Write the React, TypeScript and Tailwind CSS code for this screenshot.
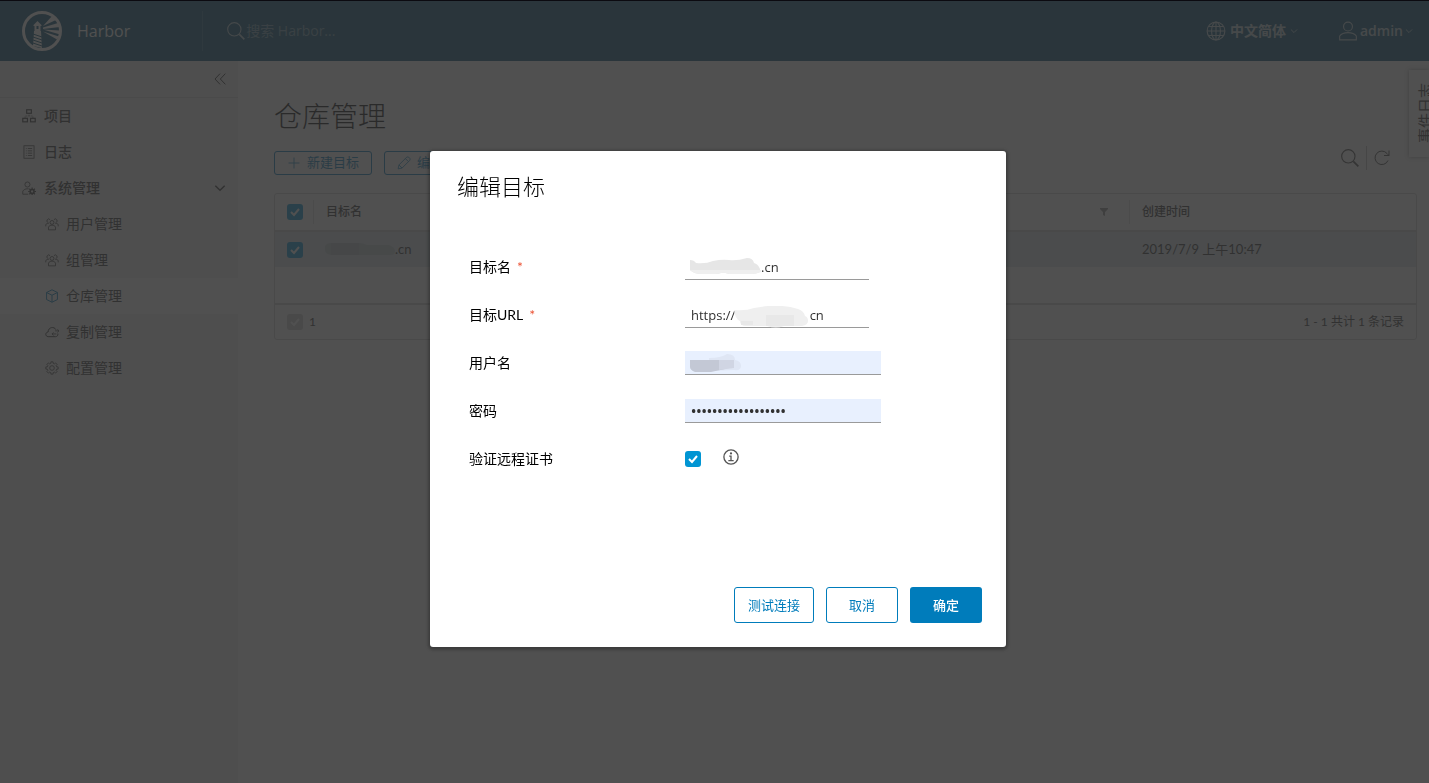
import { useState } from 'react';
import type { ReactNode } from 'react';
import { clsx } from 'clsx';

type IconProps = { className?: string; children?: ReactNode };

function Icon({ className, children }: IconProps) {
  return (
    <svg
      viewBox="0 0 36 36"
      fill="none"
      stroke="currentColor"
      strokeWidth="2"
      className={clsx('shrink-0', className)}
      aria-hidden="true"
    >
      {children}
    </svg>
  );
}

const SearchIcon = ({ className }: IconProps) => (
  <Icon className={className}>
    <circle cx="15" cy="15" r="12" />
    <path d="M24 24l9 9" strokeWidth="3" />
  </Icon>
);

const ProjectsIcon = ({ className }: IconProps) => (
  <Icon className={className}>
    <rect x="12" y="2" width="12" height="9" strokeWidth="3" />
    <rect x="2" y="24" width="12" height="9" strokeWidth="3" />
    <rect x="22" y="24" width="12" height="9" strokeWidth="3" />
    <path d="M18 11v6M8 23v-5h20v5" strokeDasharray="2 2" />
  </Icon>
);

const LogsIcon = ({ className }: IconProps) => (
  <Icon className={className}>
    <rect x="5" y="2" width="26" height="32" />
    <path d="M10 9h2M15 9h11M10 15h2M15 15h11M10 21h2M15 21h11M10 27h2M15 27h11" />
  </Icon>
);

const AdminIcon = ({ className }: IconProps) => (
  <Icon className={className}>
    <circle cx="14" cy="9" r="6.5" />
    <path d="M16 34H2v-8c3-4 7-6 12-6h3" />
    <circle cx="26" cy="27" r="5" strokeWidth="4" />
    <path d="M26 17v4M26 33v3M16 27h4M32 27h4M19 20l3 3M30 31l3 3M33 20l-3 3M22 31l-3 3" strokeWidth="3" />
  </Icon>
);

const UsersIcon = ({ className }: IconProps) => (
  <Icon className={className}>
    <circle cx="18" cy="14" r="5" />
    <path d="M9 33v-7c2-4 5-5 9-5s7 1 9 5v7z" />
    <path d="M13 7a4.500 4.500 0 1 0-5 7M2 24v-4c1-3 4-4 8-4M23 7a4.500 4.500 0 1 1 5 7M34 24v-4c-1-3-4-4-8-4" />
  </Icon>
);

const RegistryIcon = ({ className }: IconProps) => (
  <Icon className={className}>
    <path d="M18 2l14 7v18l-14 7-14-7V9zM4 9l14 7 14-7M18 16v18" strokeWidth="2.500" />
  </Icon>
);

const ReplicationIcon = ({ className }: IconProps) => (
  <Icon className={className}>
    <path d="M33 22c1 5-2 8-6 8H8c-8-1-8-11 0-12C8 5 24 3 28 12" strokeWidth="2.500" />
    <path d="M36 15H26M32 11l4 4-4 4M29 23H18M22 19l-4 4 4 4" />
  </Icon>
);

const ConfigIcon = ({ className }: IconProps) => (
  <Icon className={className}>
    <circle cx="18" cy="18" r="6" />
    <path
      strokeLinejoin="round"
      d="M15.200 2.200H20.800L21 5.900 24.400 7.300 27.200 4.900 31.100 8.800 28.700 11.600 30.100 15 33.800 15.200V20.800L30.100 21 28.700 24.400 31.100 27.200 27.200 31.100 24.400 28.700 21 30.100 20.800 33.800H15.200L15 30.100 11.600 28.700 8.800 31.100 4.900 27.200 7.300 24.400 5.900 21 2.200 20.800V15.200L5.900 15 7.300 11.600 4.900 8.800 8.800 4.900 11.600 7.300 15 5.900Z"
    />
  </Icon>
);

const GlobeIcon = ({ className }: IconProps) => (
  <Icon className={className}>
    <circle cx="18" cy="18" r="16" />
    <ellipse cx="18" cy="18" rx="8" ry="16" />
    <path d="M18 2v32M2 18h32M5 10h26M5 26h26" />
  </Icon>
);

const UserIcon = ({ className }: IconProps) => (
  <Icon className={className}>
    <circle cx="18" cy="10" r="8" />
    <path d="M3 34v-7c3-4 8-6 15-6s12 2 15 6v7z" />
  </Icon>
);

const PencilIcon = ({ className }: IconProps) => (
  <Icon className={className}>
    <path d="M3 33l2-10L25 3c2-1 4-1 5 0l3 3c1 1 1 3 0 5L13 31zM22 7l7 7M5 23l8 8" />
  </Icon>
);

const RefreshIcon = ({ className }: IconProps) => (
  <Icon className={className}>
    <path d="M30 23A13.500 13.500 0 1 1 28 9l4 4M32 3v10H22" />
  </Icon>
);

const InfoIcon = ({ className }: IconProps) => (
  <Icon className={className}>
    <circle cx="18" cy="18" r="16" strokeWidth="3" />
    <circle cx="18" cy="10" r="2.500" fill="currentColor" stroke="none" />
    <path d="M14 16h4v10M12 26h12" strokeWidth="3" />
  </Icon>
);

const ChevronIcon = ({ className }: IconProps) => (
  <Icon className={className}>
    <path d="M4 11l14 14 14-14" strokeWidth="4" />
  </Icon>
);

function Logo() {
  return (
    <svg viewBox="0 0 40 40" className="size-10 shrink-0 text-[#fafafa]" aria-hidden="true">
      <circle cx="20" cy="20" r="18.500" fill="none" stroke="currentColor" strokeWidth="3" />
      <g fill="currentColor">
        <path d="M15.500 10l4 4v1h-1v5h-6v-5h-1v-1z" />
        <path d="M12 20h7l1 17-9-2z" />
        <path d="M21 15L30 5l4 4zM21 16.500L36 12l2 4-17 2zM21 18.500l17 1v4zM21 20.500l16 5-2 3z" />
      </g>
      <path d="M14.500 15v3h2v-3z" className="fill-[#004c70]" />
      <path d="M11 23l9 3M11 26l9 3M11 29l9 3M11 32l9 3" className="stroke-[#004c70]" strokeWidth="1" />
    </svg>
  );
}

function Checkbox({ id, label, disabled }: { id?: string; label: string; disabled?: boolean }) {
  return (
    <span className="relative block size-4 shrink-0">
      <input
        id={id}
        type="checkbox"
        defaultChecked
        disabled={disabled}
        aria-label={label}
        className="block size-4 appearance-none rounded-[3px] border border-[#737373] checked:border-0 checked:bg-[#0095d3] disabled:bg-[#cccccc]"
      />
      <svg viewBox="0 0 16 16" className="pointer-events-none absolute inset-0 size-4" aria-hidden="true">
        <path d="M4 8l3 3 5-6" fill="none" stroke="#fff" strokeWidth="2" />
      </svg>
    </span>
  );
}

const adminItems = [
  { label: '用户管理', icon: UsersIcon },
  { label: '组管理', icon: UsersIcon },
  { label: '仓库管理', icon: RegistryIcon, active: true },
  { label: '复制管理', icon: ReplicationIcon },
  { label: '配置管理', icon: ConfigIcon },
];

function Header() {
  return (
    <header className="flex h-15 items-center bg-[#004c70] font-['Open_Sans','Noto_Sans_CJK_SC',sans-serif] text-sm text-[#fafafa]">
      <a href="#home" className="flex items-center gap-[15px] pl-[22px] text-base">
        <Logo />
        Harbor
      </a>
      <div className="ml-[72px] h-10 w-px bg-white/15" />
      <label className="ml-[23px] flex items-center opacity-70">
        <SearchIcon className="size-5" />
        <input
          type="search"
          aria-label="搜索"
          placeholder="搜索 Harbor..."
          className="w-60 bg-transparent outline-none placeholder:text-white/60"
        />
      </label>
      <div className="ml-auto flex items-center gap-10 pr-4 font-semibold opacity-75">
        <button className="flex items-center gap-1">
          <GlobeIcon className="size-5" />
          中文简体
          <ChevronIcon className="size-2" />
        </button>
        <button className="flex items-center gap-0.5">
          <UserIcon className="size-5" />
          admin
          <ChevronIcon className="size-2" />
        </button>
      </div>
    </header>
  );
}

function Sidebar() {
  return (
    <nav className="w-[238px] shrink-0 bg-[#eeeeee] text-sm text-[#313131]">
      <div className="flex h-9 items-center justify-end pr-3">
        <button aria-label="收起">
          <Icon className="size-3">
            <path d="M18 2L3 18l15 16M34 2L19 18l15 16" strokeWidth="3" />
          </Icon>
        </button>
      </div>
      <div className="border-t border-[#d7d7d7]">
        <a href="#projects" className="flex h-9 items-center gap-2 pl-[22px] font-medium">
          <ProjectsIcon className="size-3.5" />
          项目
        </a>
        <a href="#logs" className="flex h-9 items-center gap-2 pl-[22px] font-medium">
          <LogsIcon className="size-3.5" />
          日志
        </a>
        <button className="flex h-9 w-full items-center gap-2 pr-3 pl-[22px] font-medium">
          <AdminIcon className="size-3.5" />
          系统管理
          <ChevronIcon className="ml-auto size-3" />
        </button>
        {adminItems.map(({ label, icon: ItemIcon, active }) => (
          <a
            key={label}
            href="#admin"
            className={clsx('flex h-9 items-center gap-[7px] pl-[45px]', active && 'bg-[#fafafa]')}
          >
            <ItemIcon className={clsx('size-3.5', active && 'text-[#007cbb]')} />
            {label}
          </a>
        ))}
      </div>
    </nav>
  );
}

function ColumnHead({ children, filter }: { children: ReactNode; filter?: boolean }) {
  return (
    <th className="p-0 text-left font-medium">
      <div className="flex h-6 items-center justify-between border-l border-[#dddddd] pr-5 pl-3">
        {children}
        {filter && (
          <svg viewBox="0 0 10 10" className="size-2.5 fill-[#8a8a8a]" aria-hidden="true">
            <path d="M1 1h8v1L6 5v4l-2-1V5L1 2z" />
          </svg>
        )}
      </div>
    </th>
  );
}

function Registries() {
  return (
    <main className="min-w-0 flex-1 bg-[#fafafa] pt-[35px] pr-3 pl-9 text-[#313131]">
      <h1 className="text-[28px] leading-10 font-light text-black">仓库管理</h1>
      <div className="mt-2.5 flex items-end">
        <div className="flex gap-3 text-[13px] text-[#007cbb]">
          <button className="flex h-6 items-center gap-1.5 rounded-[3px] border border-[#007cbb] px-3">
            <Icon className="size-3.5">
              <path d="M18 4v28M4 18h28" />
            </Icon>
            新建目标
          </button>
          <button className="flex h-6 items-center gap-1.5 rounded-[3px] border border-[#007cbb] px-3">
            <PencilIcon className="size-3.5" />
            编辑
          </button>
        </div>
        <div className="mr-[26px] mb-[5px] ml-auto flex h-6 items-center gap-1.5 text-[#454545]">
          <button aria-label="过滤">
            <SearchIcon className="size-5" />
          </button>
          <span className="h-6 w-px bg-[#bbbbbb]" />
          <button aria-label="刷新">
            <RefreshIcon className="size-[18px]" />
          </button>
        </div>
      </div>

      <div className="mt-[18px] rounded-[3px] border border-[#d0d0d0]">
        <table className="w-full table-fixed text-xs">
          <colgroup>
            <col className="w-[38px]" />
            <col />
            <col />
            <col />
            <col className="w-[287px]" />
          </colgroup>
          <thead>
            <tr className="h-[37px] border-b-2 border-[#d0d0d0]">
              <th className="p-0 pl-3">
                <Checkbox label="全选" />
              </th>
              <ColumnHead filter>目标名</ColumnHead>
              <ColumnHead filter>目标URL</ColumnHead>
              <ColumnHead filter>验证远程证书</ColumnHead>
              <ColumnHead>创建时间</ColumnHead>
            </tr>
          </thead>
          <tbody>
            <tr className="h-9 bg-[#d9e4ea] text-[13px]">
              <td className="p-0 pl-3">
                <Checkbox label="选择" />
              </td>
              <td className="p-0 pl-3">
                <span className="flex items-center">
                  <svg viewBox="0 0 70 14" className="h-3.5 w-[70px]" aria-hidden="true">
                    <path d="M0 4q2-3 6-3h28q4 0 8 2h22q6 2 6 6t-4 4H6q-6-1-6-5z" fill="#c3ced2" />
                    <path d="M6 1h28v12H6z" fill="#b8c4ca" />
                  </svg>
                  .cn
                </span>
              </td>
              <td />
              <td />
              <td className="p-0 pl-[13px]">2019/7/9 上午10:47</td>
            </tr>
          </tbody>
        </table>
        <div className="h-9" />
        <div className="flex h-9 items-center gap-1.5 border-t-2 border-[#d0d0d0] px-3 text-xs">
          <Checkbox label="已选" disabled />1
          <span className="ml-auto">1 - 1 共计 1 条记录</span>
        </div>
      </div>
    </main>
  );
}

function EventTab() {
  return (
    <button className="absolute top-[69px] right-0 flex h-[87px] w-5 items-center bg-[#fafafa] pl-2 text-[15px] leading-4 text-[#313131] shadow-[0_0_4px_#00000066]">
      <span className="shrink-0 rotate-180 [text-orientation:sideways] [writing-mode:vertical-rl]">事件日志</span>
    </button>
  );
}

const inputStyle = "border-b border-[#9a9a9a] px-1.5 font-['Open_Sans','Noto_Sans_CJK_SC',sans-serif] text-[#313131] outline-none";

function Field({ id, label, required, children }: { id: string; label: string; required?: boolean; children: ReactNode }) {
  return (
    <div className="flex h-12 items-center">
      <label htmlFor={id} className="w-[216px] shrink-0">
        {label}
        {required && <span className="ml-1.5 text-[#e62700]/80">*</span>}
      </label>
      <div className="relative flex items-center">{children}</div>
    </div>
  );
}

function EditDialog() {
  const [name, setName] = useState('.cn');
  // blanks keep room for the masked host
  const [url, setUrl] = useState('https://' + '\u00a0'.repeat(22) + 'cn');

  return (
    <form
      role="dialog"
      aria-labelledby="dialog-title"
      onSubmit={(e) => e.preventDefault()}
      className="flex min-h-[496px] w-full max-w-[576px] flex-col rounded-[3px] bg-white p-6 text-sm text-black shadow-[0_1px_3px_2px_#00000040]"
    >
      <h2 id="dialog-title" className="pl-[3px] text-[22px] leading-6 font-light">
        编辑目标
      </h2>
      <div className="mt-11 pl-[15px]">
        <Field id="name" label="目标名" required>
          <input
            id="name"
            value={name}
            onChange={(e) => setName(e.target.value)}
            className={clsx(inputStyle, 'h-[26px] w-[184px] indent-[70px] text-[13px]')}
          />
          <svg viewBox="0 0 72 18" className="pointer-events-none absolute top-1 left-1 h-[18px] w-[72px]" aria-hidden="true">
            <path d="M1 2q4 0 6 3 10 1 17-2 9-2 16-1 8 1 18-2 6 0 7 5 4 1 6 6v3q-4 2-10 2H40q-6-2-8-1t-6 1H12q-7 0-11-4z" fill="#e6e6e6" />
            <path d="M1 12h71v2q-4 2-10 2H40q-6-2-8-1t-6 1H12q-7 0-11-4z" fill="#efefef" />
          </svg>
        </Field>
        <Field id="url" label="目标URL" required>
          <input
            id="url"
            value={url}
            onChange={(e) => setUrl(e.target.value)}
            className={clsx(inputStyle, 'h-[26px] w-[184px] text-[13px]')}
          />
          <svg viewBox="0 0 74 22" className="pointer-events-none absolute top-1 left-[49px] h-[22px] w-[74px]" aria-hidden="true">
            <path d="M0 4q12 1 20-2 25-5 44 1 6 2 7 7 3 1 3 5t-6 5H50q-8 3-17 0H12Q6 20 6 15 1 13 0 4z" fill="#efefef" />
            <path d="M32 9h28v11H32zM7 15h12v4H7z" fill="#e8e8e8" />
          </svg>
        </Field>
        <Field id="username" label="用户名">
          <input id="username" className={clsx(inputStyle, 'h-6 w-[196px] bg-[#e8f0fe] text-[13px]')} />
          <svg viewBox="0 0 54 20" className="pointer-events-none absolute top-0.5 left-1 h-5 w-[54px]" aria-hidden="true">
            <path d="M20 5q12 0 18-4 8 0 8 6 6 1 6 6t-7 4l-25 1z" fill="#dfe6f4" />
            <path d="M1 7h35v9l-14 3H6q-5-2-5-5z" fill="#c3c8d5" />
            <path d="M30 7h15v8l-15 2z" fill="#d0d5e3" />
          </svg>
        </Field>
        <Field id="password" label="密码">
          <input
            id="password"
            type="password"
            defaultValue="harbor-registry-pw"
            className={clsx(inputStyle, 'h-6 w-[196px] bg-[#e8f0fe] text-sm font-semibold')}
          />
        </Field>
        <Field id="verify" label="验证远程证书">
          <Checkbox id="verify" label="验证远程证书" />
          <InfoIcon className="mb-1 ml-[22px] size-4 text-[#565656]" />
        </Field>
      </div>
      <div className="mt-auto flex justify-end gap-3 text-[13px] text-[#007cbb]">
        <button type="button" className="h-9 w-20 rounded-[3px] border border-[#007cbb]">
          测试连接
        </button>
        <button type="button" className="h-9 w-18 rounded-[3px] border border-[#007cbb]">
          取消
        </button>
        <button type="submit" className="h-9 w-18 rounded-[3px] bg-[#007cbb] font-medium text-white">
          确定
        </button>
      </div>
    </form>
  );
}

export default function App() {
  return (
    <div className="relative flex min-h-screen flex-col overflow-hidden border-t border-black font-[Lato,'Noto_Sans_CJK_SC',sans-serif]">
      <Header />
      <div className="flex flex-1">
        <Sidebar />
        <Registries />
      </div>
      <EventTab />
      <div className="fixed inset-0 flex items-center justify-center border-t border-[#0b0a10] bg-[#313131]/85 pt-[14px] pl-[7px]">
        <EditDialog />
      </div>
    </div>
  );
}
